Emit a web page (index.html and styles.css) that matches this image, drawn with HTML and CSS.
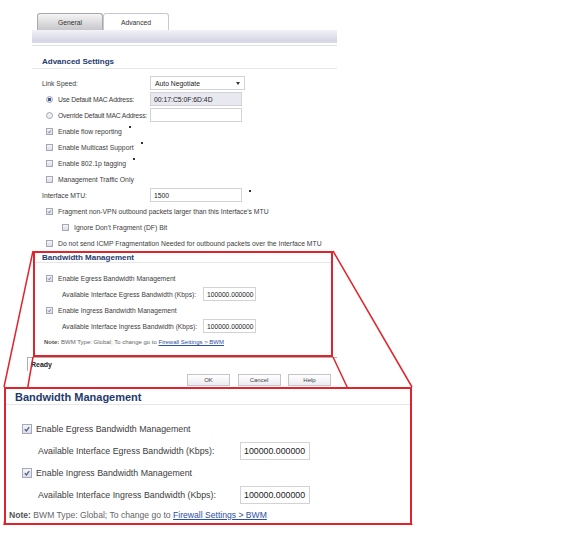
FILE: index.html
```html
<!DOCTYPE html>
<html>

<head>
    <title>Interface Settings - Advanced</title>
    <link rel="stylesheet" href="styles.css">
</head>

<body>
<div class="page">

    <div class="panel">
        <div class="tabs">
            <div class="tab">General</div>
            <div class="tab active">Advanced</div>
        </div>
        <div class="band"></div>

        <h3 class="section-title">Advanced Settings</h3>

        <div class="row">
            <span class="label">Link Speed:</span>
            <span class="select">Auto Negotiate<span class="arrow"></span></span>
        </div>
        <div class="row">
            <span class="opt rd on"></span>
            <span class="label">Use Default MAC Address:</span>
            <span class="field readonly">00:17:C5:0F:6D:4D</span>
        </div>
        <div class="row">
            <span class="opt rd"></span>
            <span class="label">Override Default MAC Address:</span>
            <span class="field"></span>
        </div>
        <div class="row">
            <span class="opt cb on"><svg viewBox="0 0 10 10"><path d="M2.2 5.2 L4.2 7.4 L7.8 2.6"/></svg></span>
            <span>Enable flow reporting</span><span class="tip"></span>
        </div>
        <div class="row">
            <span class="opt cb"></span>
            <span>Enable Multicast Support</span><span class="tip"></span>
        </div>
        <div class="row">
            <span class="opt cb"></span>
            <span>Enable 802.1p tagging</span><span class="tip"></span>
        </div>
        <div class="row">
            <span class="opt cb"></span>
            <span>Management Traffic Only</span>
        </div>
        <div class="row">
            <span class="label">Interface MTU:</span>
            <span class="field">1500</span><span class="tip"></span>
        </div>
        <div class="row">
            <span class="opt cb on"><svg viewBox="0 0 10 10"><path d="M2.2 5.2 L4.2 7.4 L7.8 2.6"/></svg></span>
            <span>Fragment non-VPN outbound packets larger than this Interface's MTU</span>
        </div>
        <div class="row">
            <span class="opt cb indent"></span>
            <span>Ignore Don't Fragment (DF) Bit</span>
        </div>
        <div class="row">
            <span class="opt cb"></span>
            <span>Do not send ICMP Fragmentation Needed for outbound packets over the Interface MTU</span>
        </div>

        <!-- Bandwidth section (outlined) -->
        <div class="bwm">
            <h3>Bandwidth Management</h3>
            <div class="row">
                <span class="opt cb on"><svg viewBox="0 0 10 10"><path d="M2.2 5.2 L4.2 7.4 L7.8 2.6"/></svg></span>
                <span>Enable Egress Bandwidth Management</span>
            </div>
            <div class="row">
                <span class="avail">Available Interface Egress Bandwidth (Kbps):</span>
                <span class="field">100000.000000</span>
            </div>
            <div class="row">
                <span class="opt cb on"><svg viewBox="0 0 10 10"><path d="M2.2 5.2 L4.2 7.4 L7.8 2.6"/></svg></span>
                <span>Enable Ingress Bandwidth Management</span>
            </div>
            <div class="row">
                <span class="avail">Available Interface Ingress Bandwidth (Kbps):</span>
                <span class="field">100000.000000</span>
            </div>
            <div class="row note">
                <b>Note:</b>&nbsp;BWM Type: Global; To change go to&nbsp;<a href="#">Firewall Settings &gt; BWM</a>
            </div>
        </div>

        <div class="status">Ready</div>

        <div class="buttons">
            <span class="btn">OK</span>
            <span class="btn">Cancel</span>
            <span class="btn">Help</span>
        </div>
    </div>

    <!-- callout lines from the small box to the enlarged copy -->
    <svg class="callout" width="576" height="537">
        <line x1="33" y1="251" x2="4" y2="387"/>
        <line x1="33" y1="357" x2="4" y2="525"/>
        <line x1="333" y1="251" x2="412" y2="387"/>
        <line x1="333" y1="357" x2="412" y2="525"/>
    </svg>

    <!-- Enlarged copy -->
    <div class="bwm zoom">
        <h3>Bandwidth Management</h3>
        <div class="row">
            <span class="opt cb on"><svg viewBox="0 0 10 10"><path d="M2.2 5.2 L4.2 7.4 L7.8 2.6"/></svg></span>
            <span>Enable Egress Bandwidth Management</span>
        </div>
        <div class="row">
            <span class="avail">Available Interface Egress Bandwidth (Kbps):</span>
            <span class="field">100000.000000</span>
        </div>
        <div class="row">
            <span class="opt cb on"><svg viewBox="0 0 10 10"><path d="M2.2 5.2 L4.2 7.4 L7.8 2.6"/></svg></span>
            <span>Enable Ingress Bandwidth Management</span>
        </div>
        <div class="row">
            <span class="avail">Available Interface Ingress Bandwidth (Kbps):</span>
            <span class="field">100000.000000</span>
        </div>
        <div class="row note">
            <b>Note:</b>&nbsp;BWM Type: Global; To change go to&nbsp;<a href="#">Firewall Settings &gt; BWM</a>
        </div>
    </div>

</div>
</body>

</html>
```

FILE: styles.css
```css
body {
    margin: 0;
    background-color: #fff;
    color: #3c3c3c;
    font-family: "Liberation Sans", Arial, sans-serif;
}

.page {
    position: relative;
    width: 576px;
    height: 537px;
    overflow: hidden;
}

.panel {
    margin-left: 32px;
    width: 305px;
    padding-top: 13px;
    font-size: 6.8px;
}

/* tabs */
.tabs {
    display: flex;
    height: 17px;
    padding-left: 5px;
}

.tab {
    width: 66px;
    height: 17px;
    box-sizing: border-box;
    border: 1px solid #a8a8b0;
    border-bottom: none;
    border-radius: 3px 3px 0 0;
    background: linear-gradient(#f4f4f4, #c8c8cc);
    display: flex;
    align-items: center;
    justify-content: center;
    color: #333;
}

.tab.active {
    background: #fff;
    border-color: #c8c8d0;
}

.band {
    height: 13px;
    padding-bottom: 2px;
    background: linear-gradient(#f2f2f7, #d6d7e4 70%, #e2e2ec);
    background-clip: content-box;
    border-bottom: 1px solid #e0e0e6;
}

.section-title {
    margin: 10px 0 6px;
    padding-left: 10px;
    font-size: 8px;
    line-height: 12px;
    color: #1f3a6d;
    border-bottom: 1px solid #e6e6ec;
}

/* rows */
.row {
    display: flex;
    align-items: center;
    height: 16px;
    padding-left: 10px;
    white-space: nowrap;
}

.label {
    width: 108px;
    flex: none;
}

.opt + .label {
    width: 92px;
    letter-spacing: -0.2px;
    overflow: hidden;
}

.opt {
    flex: none;
    margin-left: 4px;
    margin-right: 5px;
    box-sizing: border-box;
}

.opt.indent {
    margin-left: 20px;
}

.cb {
    width: 7px;
    height: 7px;
    border: 1px solid #a6a8b6;
    background: linear-gradient(#f6f6f9, #dcdde6);
    display: flex;
}

.cb svg {
    width: 100%;
    height: 100%;
}

.cb path {
    fill: none;
    stroke: #4f5f8e;
    stroke-width: 1.6;
}

.rd {
    width: 7px;
    height: 7px;
    border-radius: 50%;
    border: 1px solid #a4a6b4;
    background: #eeeef2;
}

.rd.on {
    background: radial-gradient(circle, #3d5a94 0 1.4px, #e4e6ef 2px);
}

.select {
    width: 95px;
    height: 14px;
    box-sizing: border-box;
    border: 1px solid #d2d2d8;
    padding: 0 4px;
    display: flex;
    align-items: center;
    justify-content: space-between;
    color: #222;
}

.arrow {
    border-top: 3px solid #333;
    border-left: 2px solid transparent;
    border-right: 2px solid transparent;
}

.field {
    width: 92px;
    height: 14px;
    flex: none;
    box-sizing: border-box;
    border: 1px solid #d2d2d8;
    padding-left: 3px;
    display: flex;
    align-items: center;
    background: #fff;
    color: #222;
}

.field.readonly {
    background: #e8e8f1;
}

.tip {
    width: 2px;
    height: 2px;
    background: #333;
    align-self: flex-start;
    margin: 3px 0 0 7px;
}

/* bandwidth management block */
.bwm {
    width: 300px;
    margin-left: 1px;
    box-sizing: border-box;
    border: 2px solid #e1232b;
    padding-bottom: 5px;
    background: #fff;
    font-size: 6.7px;
}

.bwm h3 {
    margin: 0 0 7px;
    padding-left: 7px;
    font-size: 8px;
    line-height: 9px;
    color: #1f3a6d;
    border-bottom: 1px solid #e6e6ec;
}

.bwm .row {
    padding-left: 7px;
}

.bwm .avail {
    width: 141px;
    margin-left: 20px;
}

.bwm .field {
    width: 53px;
}

.bwm .note {
    padding-left: 9px;
    font-size: 6px;
    color: #666;
}

.note b {
    color: #555;
}

.note a {
    color: #2c4ea3;
}

.status {
    margin-left: -5px;
    height: 14px;
    box-sizing: border-box;
    border-top: 1px solid #b0b0b0;
    border-left: 1px solid #b0b0b0;
    padding-left: 3px;
    display: flex;
    align-items: center;
    font-weight: bold;
    font-size: 7px;
    color: #222;
}

.buttons {
    display: flex;
    gap: 7.5px;
    margin-top: 3px;
    padding-left: 155px;
}

.btn {
    width: 43px;
    height: 12px;
    box-sizing: border-box;
    border: 1px solid #c4c4cc;
    background: linear-gradient(#fff, #ececf1);
    display: flex;
    align-items: center;
    justify-content: center;
    font-size: 6px;
    color: #444;
}

.callout {
    position: absolute;
    top: 0;
    left: 0;
    z-index: 1;
}

.callout line {
    stroke: #e1232b;
    stroke-width: 1.5;
}

/* enlarged copy */
.bwm.zoom {
    position: relative;
    z-index: 2;
    width: 408px;
    margin: 1px 0 0 4px;
    padding-bottom: 0;
    font-size: 8.8px;
}

.zoom h3 {
    padding: 2px 0 0 9px;
    margin-bottom: 13px;
    font-size: 11px;
    line-height: 13px;
}

.zoom .row {
    height: 22px;
    padding-left: 16px;
}

.zoom .cb {
    width: 10px;
    height: 10px;
    margin-left: 0;
    margin-right: 4px;
}

.zoom .avail {
    width: 202px;
    margin-left: 16px;
}

.zoom .field {
    width: 70px;
    height: 18px;
    padding-left: 3px;
}

.zoom .note {
    height: 17px;
    padding-left: 3px;
    font-size: 8.6px;
}
```
